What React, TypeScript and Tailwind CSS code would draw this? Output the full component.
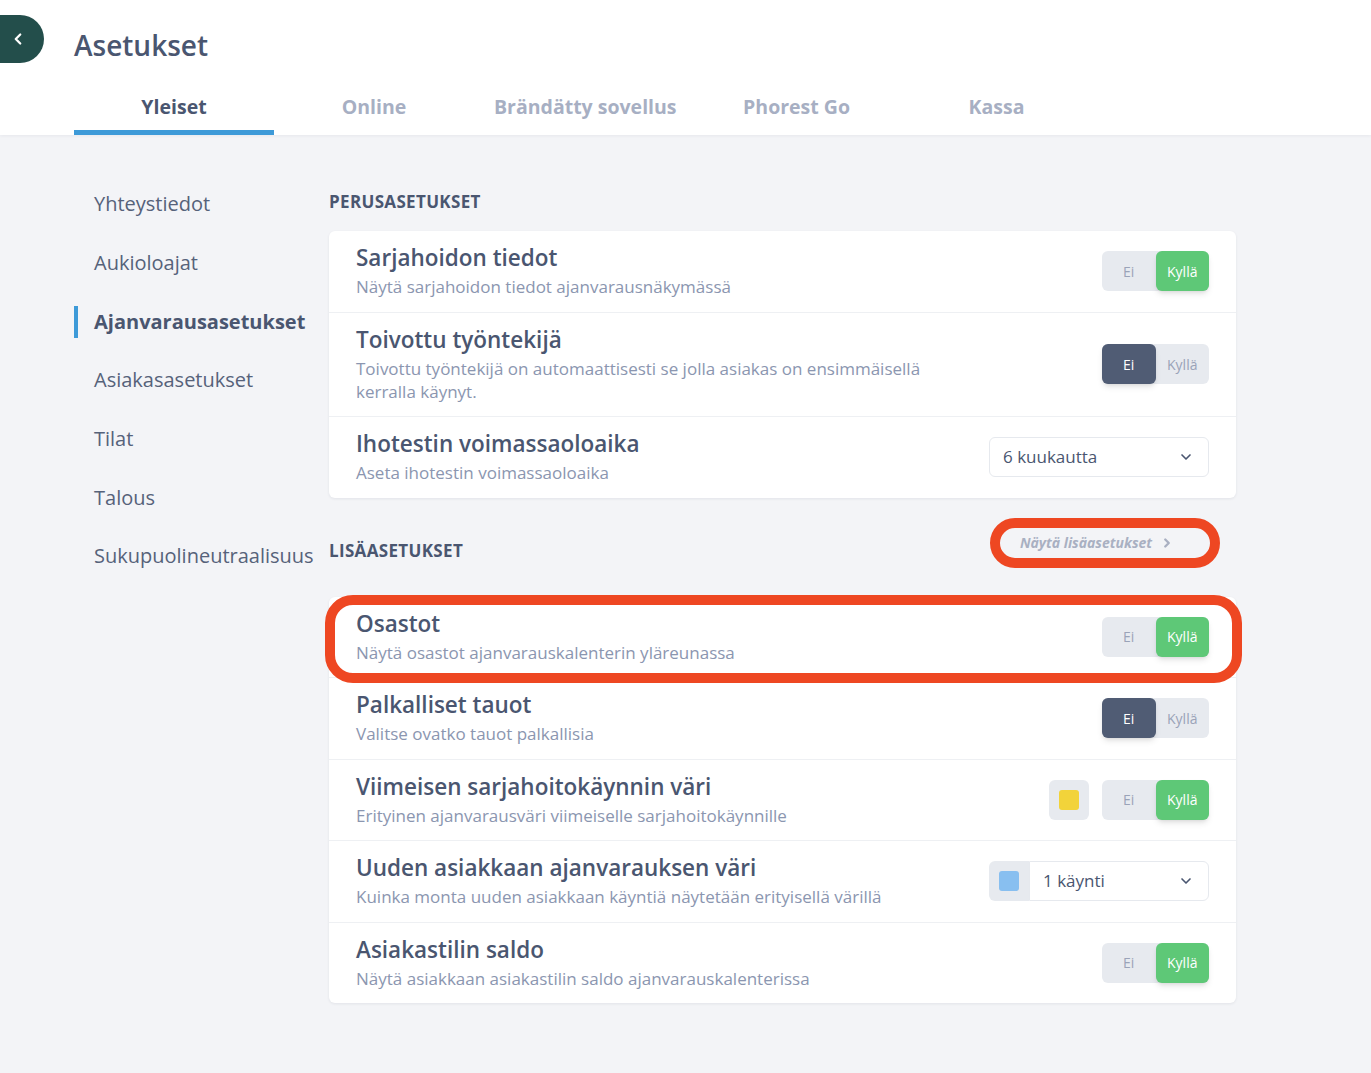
import { ChevronDown, ChevronLeft, ChevronRight } from 'lucide-react'

const FONT = { fontFamily: '"Open Sans", "Noto Sans", Arial, sans-serif' }

const TABS = ['Yleiset', 'Online', 'Brändätty sovellus', 'Phorest Go', 'Kassa']
const SIDE = [
  'Yhteystiedot',
  'Aukioloajat',
  'Ajanvarausasetukset',
  'Asiakasasetukset',
  'Tilat',
  'Talous',
  'Sukupuolineutraalisuus',
]

type Control =
  | { kind: 'toggle'; on: boolean; swatch?: string }
  | { kind: 'select'; value: string; swatch?: string }

type Row = { title: string; desc: string; control: Control; highlight?: boolean }

const BASIC: Row[] = [
  {
    title: 'Sarjahoidon tiedot',
    desc: 'Näytä sarjahoidon tiedot ajanvarausnäkymässä',
    control: { kind: 'toggle', on: true },
  },
  {
    title: 'Toivottu työntekijä',
    desc: 'Toivottu työntekijä on automaattisesti se jolla asiakas on ensimmäisellä kerralla käynyt.',
    control: { kind: 'toggle', on: false },
  },
  {
    title: 'Ihotestin voimassaoloaika',
    desc: 'Aseta ihotestin voimassaoloaika',
    control: { kind: 'select', value: '6 kuukautta' },
  },
]

const EXTRA: Row[] = [
  {
    title: 'Osastot',
    desc: 'Näytä osastot ajanvarauskalenterin yläreunassa',
    control: { kind: 'toggle', on: true },
    highlight: true,
  },
  {
    title: 'Palkalliset tauot',
    desc: 'Valitse ovatko tauot palkallisia',
    control: { kind: 'toggle', on: false },
  },
  {
    title: 'Viimeisen sarjahoitokäynnin väri',
    desc: 'Erityinen ajanvarausväri viimeiselle sarjahoitokäynnille',
    control: { kind: 'toggle', on: true, swatch: '#f2d33a' },
  },
  {
    title: 'Uuden asiakkaan ajanvarauksen väri',
    desc: 'Kuinka monta uuden asiakkaan käyntiä näytetään erityisellä värillä',
    control: { kind: 'select', value: '1 käynti', swatch: '#88bff0' },
  },
  {
    title: 'Asiakastilin saldo',
    desc: 'Näytä asiakkaan asiakastilin saldo ajanvarauskalenterissa',
    control: { kind: 'toggle', on: true },
  },
]

function Toggle({ on }: { on: boolean }) {
  return (
    <div className="flex h-10 w-[107px] rounded-md bg-[#e7eaef] text-[14px]">
      <div
        className={`flex w-1/2 items-center justify-center rounded-md ${
          on ? 'text-[#9aa3b8]' : 'bg-[#505c74] text-white shadow-md'
        }`}
      >
        Ei
      </div>
      <div
        className={`flex w-1/2 items-center justify-center rounded-md ${
          on ? 'bg-[#5ec877] text-white shadow-md' : 'text-[#9aa3b8]'
        }`}
      >
        Kyllä
      </div>
    </div>
  )
}

function Swatch({ color, joined }: { color: string; joined?: boolean }) {
  return (
    <div
      className={`flex h-10 w-10 items-center justify-center bg-[#e7eaef] ${
        joined ? 'rounded-l-md' : 'rounded-md'
      }`}
    >
      <div className="h-5 w-5 rounded-[3px]" style={{ backgroundColor: color }} />
    </div>
  )
}

function ControlView({ control }: { control: Control }) {
  if (control.kind === 'toggle') {
    return (
      <div className="flex items-center gap-[13px]">
        {control.swatch && <Swatch color={control.swatch} />}
        <Toggle on={control.on} />
      </div>
    )
  }
  return (
    <div className="flex items-center">
      {control.swatch && <Swatch color={control.swatch} joined />}
      <div
        className={`flex h-10 items-center justify-between border border-[#e6e9ee] bg-white pl-[13px] pr-[14px] text-[17px] text-[#4a5670] ${
          control.swatch ? 'w-[180px] rounded-r-md' : 'w-[220px] rounded-md'
        }`}
      >
        <span>{control.value}</span>
        <ChevronDown size={16} strokeWidth={2.5} className="text-[#4a5670]" />
      </div>
    </div>
  )
}

function SettingRow({ row, last }: { row: Row; last: boolean }) {
  return (
    <div
      className={`relative flex items-center justify-between px-[27px] pt-[13px] pb-[13.5px] ${
        last ? '' : 'border-b border-[#eef0f3]'
      }`}
    >
      <div className="max-w-[580px]">
        <div className="text-[22.5px] font-semibold leading-[28px] text-[#4a5670]">{row.title}</div>
        <div className="mt-[3px] text-[17px] leading-[23px] text-[#8b96b0]">{row.desc}</div>
      </div>
      <ControlView control={row.control} />
      {row.highlight && (
        <div className="pointer-events-none absolute -top-[2px] -bottom-[6px] -left-[4px] -right-[6px] rounded-[28px] border-[10px] border-[#ee4722]" />
      )}
    </div>
  )
}

function Card({ rows }: { rows: Row[] }) {
  return (
    <div className="rounded-md bg-white shadow-[0_1px_3px_rgba(30,40,60,0.08)]">
      {rows.map((r, i) => (
        <SettingRow key={r.title} row={r} last={i === rows.length - 1} />
      ))}
    </div>
  )
}

function SectionTitle({ children }: { children: string }) {
  return (
    <h2 className="text-[17px] font-bold uppercase leading-5 tracking-[0.02em] text-[#4a5670]">
      {children}
    </h2>
  )
}

export default function App() {
  return (
    <div className="min-h-[1073px] bg-[#f3f4f7]" style={FONT}>
      <header className="bg-white shadow-[0_1px_3px_rgba(30,40,60,0.06)]">
        <div className="flex items-start pt-[15px]">
          <button className="flex h-12 w-11 items-center justify-center rounded-r-full bg-[#234e4b] pr-[8px] text-white">
            <ChevronLeft size={18} strokeWidth={3} />
          </button>
          <h1 className="ml-[30px] pt-[10px] text-[28px] font-semibold leading-[40px] text-[#4a5670]">
            Asetukset
          </h1>
        </div>
        <nav className="mt-[17px] flex pl-[74px]">
          {TABS.map((t, i) => (
            <div
              key={t}
              className={`flex h-[53px] min-w-[200px] items-start justify-center border-b-[5px] px-5 pt-[11px] text-[19.5px] font-bold leading-[27px] ${
                i === 0 ? 'border-[#3d9ad8] text-[#4a5670]' : 'border-transparent text-[#a7afc3]'
              }`}
            >
              {t}
            </div>
          ))}
        </nav>
      </header>

      <div className="flex pl-[74px] pt-[57px]">
        <aside className="-mt-[17px] w-[255px] shrink-0">
          {SIDE.map((s, i) => (
            <div key={s} className="flex h-[58.7px] items-center">
              <div
                className={`flex h-[32px] items-center border-l-4 pl-4 text-[20px] ${
                  i === 2 ? 'border-[#3d9ad8] font-bold text-[#4a5670]' : 'border-transparent text-[#56627a]'
                }`}
              >
                {s}
              </div>
            </div>
          ))}
        </aside>

        <main className="w-[907px] pb-16">
          <SectionTitle>Perusasetukset</SectionTitle>
          <div className="mt-[19px]">
            <Card rows={BASIC} />
          </div>

          <div className="mt-[20px] flex h-[50px] items-center justify-between">
            <div className="mt-[17px]">
              <SectionTitle>Lisäasetukset</SectionTitle>
            </div>
            <div className="mr-[16px] flex h-[50px] w-[230px] items-center justify-center gap-[8px] rounded-full border-[10px] border-[#ee4722] pr-[16px] text-[14px] font-bold italic text-[#a9b0c2]">
              Näytä lisäasetukset
              <ChevronRight size={14} strokeWidth={4} />
            </div>
          </div>

          <div className="mt-[29px]">
            <Card rows={EXTRA} />
          </div>
        </main>
      </div>
    </div>
  )
}
